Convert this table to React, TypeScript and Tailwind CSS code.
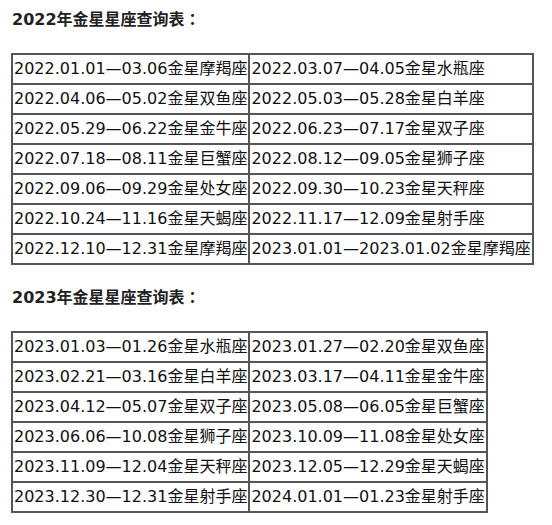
const FONT = "font-['DejaVu_Sans','Noto_Sans_CJK_SC',sans-serif]";

const TABLE_2022: [string, string][] = [
  ["2022.01.01—03.06金星摩羯座", "2022.03.07—04.05金星水瓶座"],
  ["2022.04.06—05.02金星双鱼座", "2022.05.03—05.28金星白羊座"],
  ["2022.05.29—06.22金星金牛座", "2022.06.23—07.17金星双子座"],
  ["2022.07.18—08.11金星巨蟹座", "2022.08.12—09.05金星狮子座"],
  ["2022.09.06—09.29金星处女座", "2022.09.30—10.23金星天秤座"],
  ["2022.10.24—11.16金星天蝎座", "2022.11.17—12.09金星射手座"],
  ["2022.12.10—12.31金星摩羯座", "2023.01.01—2023.01.02金星摩羯座"],
];

const TABLE_2023: [string, string][] = [
  ["2023.01.03—01.26金星水瓶座", "2023.01.27—02.20金星双鱼座"],
  ["2023.02.21—03.16金星白羊座", "2023.03.17—04.11金星金牛座"],
  ["2023.04.12—05.07金星双子座", "2023.05.08—06.05金星巨蟹座"],
  ["2023.06.06—10.08金星狮子座", "2023.10.09—11.08金星处女座"],
  ["2023.11.09—12.04金星天秤座", "2023.12.05—12.29金星天蝎座"],
  ["2023.12.30—12.31金星射手座", "2024.01.01—01.23金星射手座"],
];

// 冒号用 TC 字体，让全角标点居中
function Heading({ year }: { year: string }) {
  return (
    <h2 className="mb-[21px] h-6 pl-px text-base font-bold leading-6 text-[#222]">
      {year}年金星星座查询表
      <span className="font-['Noto_Sans_CJK_TC',sans-serif] leading-none">：</span>
    </h2>
  );
}

function DateTable({ rows }: { rows: [string, string][] }) {
  return (
    <table className="border-separate border-spacing-0 border border-[#555]">
      <tbody>
        {rows.map((r) => (
          <tr key={r[0]}>
            {r.map((c) => (
              <td
                key={c}
                className="whitespace-nowrap border border-[#555] px-px py-[2px] text-base leading-6 text-[#111]"
              >
                {c}
              </td>
            ))}
          </tr>
        ))}
      </tbody>
    </table>
  );
}

export default function App() {
  return (
    <div className={`${FONT} min-h-[525px] w-[552px] bg-white pl-[11px] pt-2`}>
      <Heading year="2022" />
      <div className="mb-[21px]">
        <DateTable rows={TABLE_2022} />
      </div>
      <Heading year="2023" />
      <DateTable rows={TABLE_2023} />
    </div>
  );
}
